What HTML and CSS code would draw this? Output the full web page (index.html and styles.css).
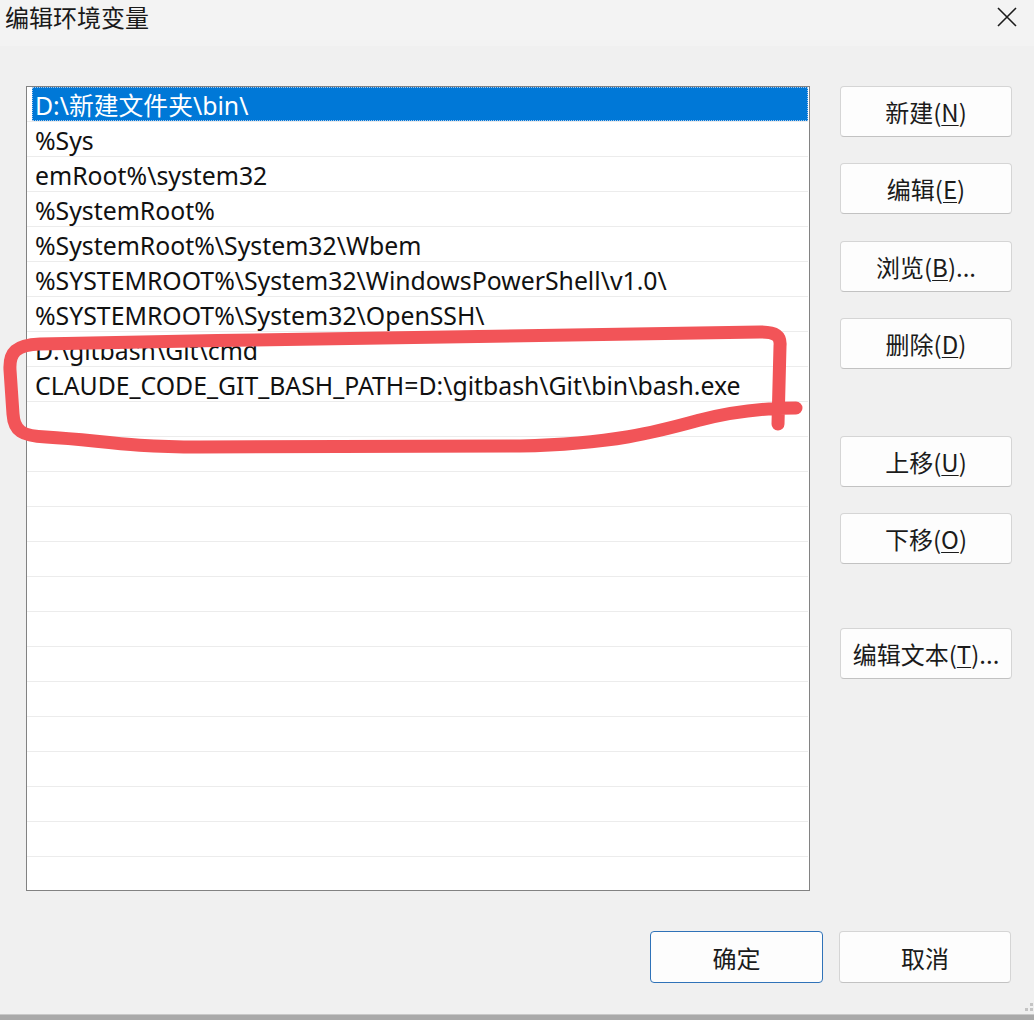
FILE: index.html
```html
<!DOCTYPE html>
<html lang="zh-CN">
<head>
<meta charset="utf-8">
<title>编辑环境变量</title>
<link rel="stylesheet" href="styles.css">
</head>
<body>
<div class="dialog">
  <div class="titlebar">
    <span class="title">编辑环境变量</span>
    <svg class="close" width="20" height="20" viewBox="0 0 20 20"><path d="M1 1 L19 19 M19 1 L1 19" stroke="#1b1b1b" stroke-width="1.6" fill="none"/></svg>
  </div>
  <div class="content">
    <div class="list">
      <div class="row selected"><span class="sel">D:\新建文件夹\bin\</span></div>
      <div class="row">%Sys</div>
      <div class="row">emRoot%\system32</div>
      <div class="row">%SystemRoot%</div>
      <div class="row">%SystemRoot%\System32\Wbem</div>
      <div class="row">%SYSTEMROOT%\System32\WindowsPowerShell\v1.0\</div>
      <div class="row">%SYSTEMROOT%\System32\OpenSSH\</div>
      <div class="row">D:\gitbash\Git\cmd</div>
      <div class="row">CLAUDE_CODE_GIT_BASH_PATH=D:\gitbash\Git\bin\bash.exe</div>
      <div class="row"></div>
      <div class="row"></div>
      <div class="row"></div>
      <div class="row"></div>
      <div class="row"></div>
      <div class="row"></div>
      <div class="row"></div>
      <div class="row"></div>
      <div class="row"></div>
      <div class="row"></div>
      <div class="row"></div>
      <div class="row"></div>
      <div class="row"></div>
      <div class="row last"></div>
    </div>
    <div class="actions">
      <button class="btn">新建(<u>N</u>)</button>
      <button class="btn g26">编辑(<u>E</u>)</button>
      <button class="btn g27">浏览(<u>B</u>)...</button>
      <button class="btn g26">删除(<u>D</u>)</button>
      <button class="btn g67">上移(<u>U</u>)</button>
      <button class="btn g26">下移(<u>O</u>)</button>
      <button class="btn g64">编辑文本(<u>T</u>)...</button>
    </div>
  </div>
  <div class="footer">
    <button class="btn wide default">确定</button>
    <button class="btn wide">取消</button>
  </div>
  <div class="grip">
    <svg width="14" height="12" viewBox="0 0 14 12"><rect x="10" y="1" width="3" height="3" fill="#c4c4c4"/><rect x="5" y="6" width="3" height="3" fill="#c4c4c4"/><rect x="10" y="6" width="3" height="3" fill="#c4c4c4"/></svg>
  </div>
</div>
<div class="edge"></div>
<svg class="scribble" width="1034" height="1020" viewBox="0 0 1034 1020">
  <path d="M778 424 L780 346 C781 336 776 332 760 332 C600 333 300 339 40 344 C16 345 9 352 10 370 L13 414 C14 431 22 436 46 437 C100 440 122 447 200 447 L520 446 C615 444 660 431 700 420 C735 411 768 408 796 408" fill="none" stroke="#f25458" stroke-width="13" stroke-linecap="round" stroke-linejoin="round"/>
</svg>
</body>
</html>
```
FILE: styles.css
```css
* { box-sizing: border-box; }
html, body {
  margin: 0;
  padding: 0;
  width: 1034px;
  height: 1020px;
  overflow: hidden;
  background: #a9a9a9;
  font-family: "Noto Sans", "Noto Sans CJK SC", sans-serif;
  color: #1b1b1b;
}
.dialog {
  position: relative;
  height: 1014px;
  background: #f0f0f0;
  display: flex;
  flex-direction: column;
}
.titlebar {
  height: 46px;
  background: #f3f3f3;
  display: flex;
  align-items: flex-start;
  justify-content: space-between;
  padding: 0 17px 0 5px;
}
.title {
  font-family: "Noto Sans CJK SC", sans-serif;
  font-size: 24px;
  line-height: 34px;
  color: #1a1a1a;
}
.close { margin-top: 7px; }
.content {
  display: flex;
  gap: 30px;
  padding: 40px 0 0 26px;
}
.list {
  width: 784px;
  height: 805px;
  background: #ffffff;
  border: 1px solid #828282;
  overflow: hidden;
}
.row {
  height: 35px;
  border-bottom: 1px solid #ececec;
  margin-right: 1px;
  padding-left: 8px;
  font-size: 24.8px;
  line-height: 36px;
  white-space: nowrap;
  color: #111;
}
.row.selected {
  padding-left: 5px;
}
.sel {
  display: block;
  height: 34px;
  background: #0078d7;
  color: #ffffff;
  padding-left: 3px;
  outline: 1px dotted #a8c8ec;
  outline-offset: -1px;
}
.actions {
  display: flex;
  flex-direction: column;
  width: 172px;
}
.btn {
  height: 51px;
  background: #fdfdfd;
  border: 1px solid #d5d5d5;
  border-bottom-color: #c2c2c2;
  border-radius: 4px;
  font-family: "Noto Sans CJK SC", sans-serif;
  font-size: 24px;
  color: #1b1b1b;
  padding: 0;
}
.btn u { text-underline-offset: 3px; text-decoration-thickness: 1px; }
.g26 { margin-top: 26px; }
.g27 { margin-top: 27px; }
.g67 { margin-top: 67px; }
.g64 { margin-top: 64px; }
.footer {
  display: flex;
  justify-content: flex-end;
  gap: 16px;
  padding: 40px 23px 0 0;
}
.btn.wide { width: 172px; height: 52px; }
.btn.default { width: 173px; border: 1px solid #2f72b8; }
.grip {
  position: absolute;
  right: 0;
  bottom: 0;
  line-height: 0;
}
.edge {
  height: 6px;
  background: #a9a9a9;
  border-top: 1px solid #c8c8c8;
}
.scribble {
  position: absolute;
  left: 0;
  top: 0;
  pointer-events: none;
}
```
